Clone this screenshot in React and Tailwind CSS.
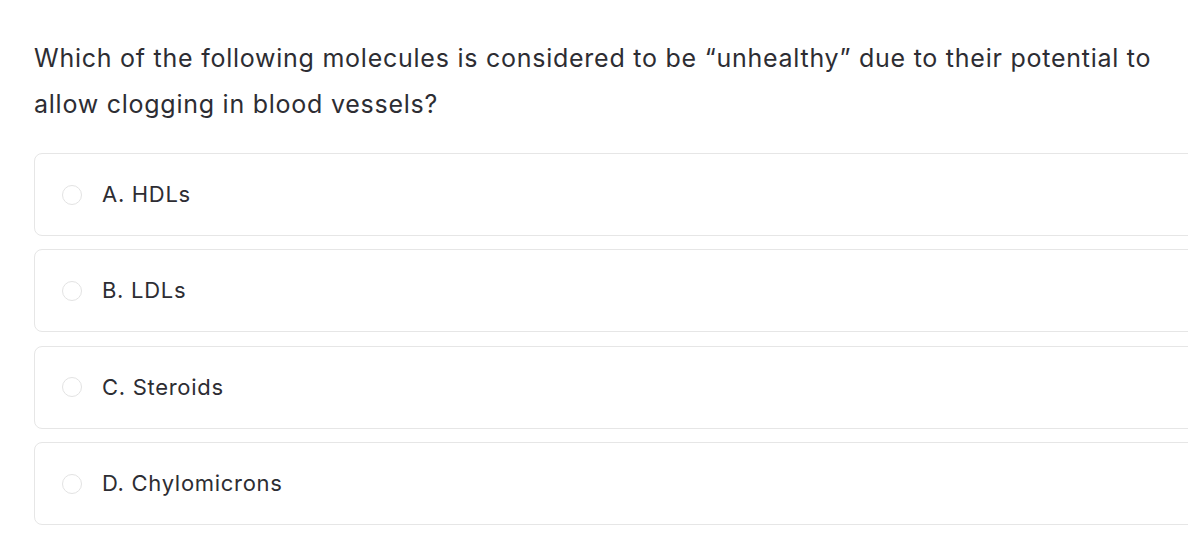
const options = ["A. HDLs", "B. LDLs", "C. Steroids", "D. Chylomicrons"];

export default function App() {
	return (
		<div
			className="w-[1188px] h-[540px] overflow-hidden bg-white text-[#2d2d33]"
			style={{ fontFamily: "Inter, 'Liberation Sans', sans-serif" }}>
			<div className="pl-[34px] pt-[35px]">
				<p className="text-[25px] leading-[46px] tracking-[0.75px] w-[1140px]">
					Which of the following molecules is considered to be “unhealthy” due to their potential to allow clogging in blood vessels?
				</p>
				<div className="mt-[26px] flex flex-col gap-[13.4px] w-[1200px]">
					{options.map((opt) => (
						<div
							key={opt}
							className="h-[83px] border border-[#e6e6e6] rounded-[8px] flex items-center pl-[27px]">
							<span className="w-[20px] h-[20px] rounded-full border border-[#e3e3e3] shrink-0" />
							<span className="ml-[20px] text-[22px] tracking-[0.7px]">{opt}</span>
						</div>
					))}
				</div>
			</div>
		</div>
	);
}
